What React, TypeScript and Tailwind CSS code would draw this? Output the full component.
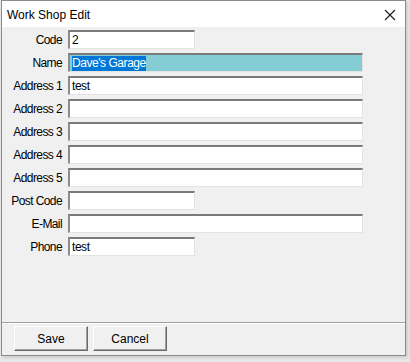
import React from "react";

type Field = {
  label: string;
  value?: string;
  wide?: boolean;
  selected?: boolean;
};

const fields: Field[] = [
  { label: "Code", value: "2" },
  { label: "Name", value: "Dave's Garage", wide: true, selected: true },
  { label: "Address 1", value: "test", wide: true },
  { label: "Address 2", wide: true },
  { label: "Address 3", wide: true },
  { label: "Address 4", wide: true },
  { label: "Address 5", wide: true },
  { label: "Post Code" },
  { label: "E-Mail", wide: true },
  { label: "Phone", value: "test" },
];

const FieldRow = ({ label, value, wide, selected }: Field) => (
  <div className="flex h-[19px] items-center">
    <div className="w-[61px] pr-px text-right tracking-[-0.6px]">{label}</div>
    <div
      className={
        "ml-[5px] flex h-[19px] items-center border-t-2 border-l-2 border-r border-b border-t-[#7a7a7a] border-l-[#8c8c8c] border-r-[#e3e3e3] border-b-[#e3e3e3] pl-[2px] " +
        (wide ? "w-[295px] " : "w-[127px] ") +
        (selected ? "bg-[#84cdd4]" : "bg-white")
      }
    >
      {selected ? (
        <span className="bg-[#0078d7] leading-[15px] text-white">{value}</span>
      ) : (
        <span className="leading-[15px]">{value}</span>
      )}
    </div>
  </div>
);

const WinButton = ({ title }: { title: string }) => (
  <button className="flex h-[25px] w-[74px] items-center justify-center border border-t-white border-l-white border-r-[#696969] border-b-[#696969] bg-[#f0f0f0] tracking-normal shadow-[inset_-1px_-1px_0_#a0a0a0]">
    {title}
  </button>
);

export default function App() {
  return (
    <div
      className="h-[362px] w-[410px] overflow-hidden bg-[#e8e8e8] text-[12px] tracking-[-0.45px] text-black"
      style={{ fontFamily: '"Liberation Sans", Arial, sans-serif' }}
    >
      <div className="ml-px flex h-[356px] w-[405px] flex-col border border-[#8a8a8a] bg-[#f0f0f0] shadow-[2px_2px_3px_rgba(0,0,0,0.12)]">
        <div className="flex h-[26px] items-center justify-between bg-white pl-[5px] pr-[9px] tracking-normal">
          <span className="pt-px">Work Shop Edit</span>
          <svg width="12" height="12" viewBox="0 0 12 12" className="mt-px">
            <path d="M1 1 L11 11 M11 1 L1 11" stroke="#1a1a1a" strokeWidth="1.1" />
          </svg>
        </div>
        <div className="flex flex-col gap-[4px] pt-[3px]">
          {fields.map((f, i) => (
            <FieldRow key={i} {...f} />
          ))}
        </div>
        <div className="mt-auto border-t border-t-[#a0a0a0]">
          <div className="flex h-[32px] gap-[5px] border-t border-t-white pl-[12px] pt-[2px]">
            <WinButton title="Save" />
            <WinButton title="Cancel" />
          </div>
        </div>
      </div>
    </div>
  );
}
